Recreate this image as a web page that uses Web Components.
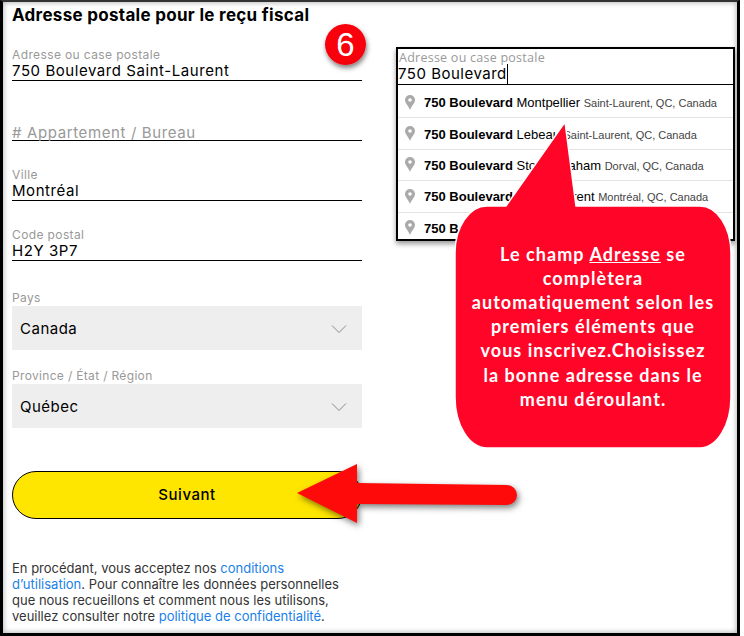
<!DOCTYPE html>
<html lang="fr">
<head>
<meta charset="utf-8">
<title>Adresse postale</title>
<style>
  html, body { margin: 0; background: #fff; }
  body { width: 744px; height: 636px; overflow: hidden; font-family: Inter, "Liberation Sans", sans-serif; }
</style>
</head>
<body>
<tuto-frame>
  <postal-form slot="form">
    <text-field label="Adresse ou case postale" value="750 Boulevard Saint-Laurent"></text-field>
    <text-field placeholder="# Appartement / Bureau"></text-field>
    <text-field label="Ville" value="Montréal"></text-field>
    <text-field label="Code postal" value="H2Y 3P7"></text-field>
    <select-field label="Pays" value="Canada"></select-field>
    <select-field label="Province / État / Région" value="Québec"></select-field>
    <yellow-button>Suivant</yellow-button>
    <legal-note>En procédant, vous acceptez nos <a href="#">conditions d’utilisation</a>. Pour connaître les données personnelles que nous recueillons et comment nous les utilisons, veuillez consulter notre <a href="#">politique de confidentialité</a>.</legal-note>
  </postal-form>
  <address-suggest slot="side" label="Adresse ou case postale" value="750 Boulevard">
    <suggest-row strong="750 Boulevard" rest=" Montpellier" place="Saint-Laurent, QC, Canada"></suggest-row>
    <suggest-row strong="750 Boulevard" rest=" Lebeau" place="Saint-Laurent, QC, Canada"></suggest-row>
    <suggest-row strong="750 Boulevard" rest=" Stoneygraham" place="Dorval, QC, Canada"></suggest-row>
    <suggest-row strong="750 Boulevard" rest=" Saint-Laurent" place="Montréal, QC, Canada"></suggest-row>
    <suggest-row strong="750 Boulevard" rest="" place=""></suggest-row>
  </address-suggest>
  <step-badge>6</step-badge>
  <speech-callout>Le champ <u>Adresse</u> se<br>complètera<br>automatiquement selon les<br>premiers éléments que<br>vous inscrivez.Choisissez<br>la bonne adresse dans le<br>menu déroulant.</speech-callout>
  <red-arrow></red-arrow>
</tuto-frame>
<script>
function define(name, css, html) {
  customElements.define(name, class extends HTMLElement {
    connectedCallback() {
      if (this.shadowRoot) return;
      const shadow = this.attachShadow({ mode: 'open' });
      shadow.innerHTML = `<style>${css}</style>` + html(this);
    }
  });
}

define('tuto-frame', `
  :host { display: block; position: relative; box-sizing: border-box; width: 740px; height: 636px;
    border: solid #000; border-width: 2px 3px 3px 3px; border-top-color: #333; box-shadow: inset 0 0 5px 1px #bbb; }
  .cols { display: flex; align-items: flex-start; }
`, () => `
  <div class="cols"><slot name="form"></slot><slot name="side"></slot></div>
  <slot></slot>
`);

define('postal-form', `
  :host { display: block; box-sizing: border-box; width: 359px; padding: 4px 0 0 9px; color: #000; }
  h2 { margin: 0 0 16px; font: 700 17px/18px Inter, "Liberation Sans", sans-serif; letter-spacing: .3px; }
`, () => `<h2>Adresse postale pour le reçu fiscal</h2><slot></slot>`);

define('text-field', `
  :host { display: flex; flex-direction: column; justify-content: flex-end; box-sizing: border-box; height: 60px; border-bottom: 1px solid #000; }
  :host(:first-of-type) { height: 41px; }
  .l { font: 12px/14px Inter, "Liberation Sans", sans-serif; color: #999; letter-spacing: .38px; }
  .v { font: 15px/18px Inter, "Liberation Sans", sans-serif; color: #000; letter-spacing: .56px; }
  .p { font: 15px/18px Inter, "Liberation Sans", sans-serif; color: #999; letter-spacing: .62px; margin-bottom: -2px; }
`, el => el.hasAttribute('placeholder')
  ? `<div class="p">${el.getAttribute('placeholder')}</div>`
  : `<div class="l">${el.getAttribute('label')}</div><div class="v">${el.getAttribute('value')}</div>`);

define('select-field', `
  :host { display: block; margin-top: 29px; }
  :host(:nth-of-type(2)) { margin-top: 18px; }
  .l { font: 12px/16px Inter, "Liberation Sans", sans-serif; color: #999; letter-spacing: .33px; }
  .box { display: flex; align-items: center; justify-content: space-between; box-sizing: border-box; height: 44px; padding: 1px 15px 0 8px; background: #eee;
    font: 15px/18px Inter, "Liberation Sans", sans-serif; letter-spacing: .5px; color: #000; }
  svg { width: 16px; height: 10px; display: block; }
`, el => `<div class="l">${el.getAttribute('label')}</div>
  <div class="box"><span>${el.getAttribute('value')}</span>
  <svg viewBox="0 0 16 10"><path d="M1 1.5 8 8.5 15 1.5" fill="none" stroke="#8a8a8a" stroke-width="1"/></svg></div>`);

define('yellow-button', `
  :host { display: flex; align-items: center; justify-content: center; box-sizing: border-box; height: 48px; margin-top: 43px;
    background: #ffe600; border: 1px solid #000; border-radius: 24px; color: #000; font: 500 15px/18px Inter, "Liberation Sans", sans-serif; letter-spacing: .55px; }
`, () => `<slot></slot>`);

define('legal-note', `
  :host { display: block; margin-top: 41px; width: 335px; font: 13px/16px Inter, "Liberation Sans", sans-serif; color: #333; }
  ::slotted(a) { color: #1a7fe8; text-decoration: none; }
`, () => `<slot></slot>`);

define('address-suggest', `
  :host { display: block; box-sizing: border-box; width: 339px; height: 194px; margin: 45px 0 0 34px; border: 2px solid #000; box-shadow: 0 3px 5px rgba(0,0,0,.4); overflow: hidden; background: #fff; }
  .in { box-sizing: border-box; height: 36px; border-bottom: 1px solid #000; padding: 2px 0 0 1px; margin-bottom: 2px; }
  .l { font: 12.5px/14px "Open Sans", "Liberation Sans", sans-serif; color: #999; letter-spacing: .25px; }
  .v { font: 15px/20px Inter, "Liberation Sans", sans-serif; color: #000; letter-spacing: .5px; margin: -1px 0 0 -1px; }
  .c { display: inline-block; border-right: 1px solid #000; }
`, el => `<div class="in"><div class="l">${el.getAttribute('label')}</div>
  <div class="v"><span class="c">${el.getAttribute('value')}</span></div></div><slot></slot>`);

define('suggest-row', `
  :host { display: flex; align-items: center; box-sizing: border-box; height: 31.4px; padding-left: 7px; border-bottom: 1px solid #e3e3e3; white-space: nowrap; font-family: "Liberation Sans", Arial, sans-serif; color: #000; }
  svg { width: 10px; height: 15px; flex: none; margin: 0 9px 0 0; }
  b { font-size: 13px; }
  span { font-size: 13px; font-weight: 400; white-space: pre; }
  small { font-size: 11px; color: #444; }
`, el => `<svg viewBox="0 0 10 15"><path fill-rule="evenodd" fill="#aaa" d="M5 0a5 5 0 0 1 5 5c0 3-3 5-5 10C3 10 0 8 0 5a5 5 0 0 1 5-5zM5 3.2a1.8 1.8 0 1 0 0 3.6 1.8 1.8 0 0 0 0-3.6z"/></svg>
  <div><b>${el.getAttribute('strong')}</b><span>${el.getAttribute('rest')} </span><small>${el.getAttribute('place')}</small></div>`);

define('step-badge', `
  :host { position: absolute; left: 322px; top: 22px; width: 41px; height: 41px; border-radius: 50%; display: flex; align-items: center; justify-content: center;
    background: radial-gradient(circle at 50% 45%, #f8000c 60%, #dd0010 100%); color: #fff; font: 33px/1 "Liberation Sans", Arial, sans-serif; box-shadow: 1px 3px 5px rgba(0,0,0,.5); }
`, () => `<slot></slot>`);

define('speech-callout', `
  :host { position: absolute; left: 449px; top: 117px; width: 280px; height: 332px; display: block; }
  svg { position: absolute; inset: 0; width: 100%; height: 100%; overflow: visible; }
  .t { position: absolute; left: 0; top: 122.5px; width: 282px; text-align: center; color: #fff; font: 700 18px/24.2px Lato, "Liberation Sans", sans-serif; letter-spacing: 1.05px; }
`, () => `
  <svg viewBox="0 0 280 332"><path fill="#ff0628" stroke="#fff" stroke-width="1.5" d="M113 3 L124 87 H248 C265 87 279 108 279 134 V278 C279 306 265 329 248 329 H35 C17 329 3 306 3 278 V134 C3 108 17 87 35 87 H54 Z"/></svg>
  <div class="t"><slot></slot></div>
`);

define('red-arrow', `
  :host { position: absolute; left: 290px; top: 456px; width: 232px; height: 75px; display: block; }
  svg { display: block; width: 100%; height: 100%; overflow: visible; filter: drop-shadow(2px 3px 3px rgba(0,0,0,.5)); }
`, () => `<svg viewBox="0 0 232 75"><path fill="#ff0a0a" d="M4 35 L64 6 V25 L214 27 A10 10 0 0 1 214 47 L64 46 V65 Z"/></svg>`);
</script>
</body>
</html>
